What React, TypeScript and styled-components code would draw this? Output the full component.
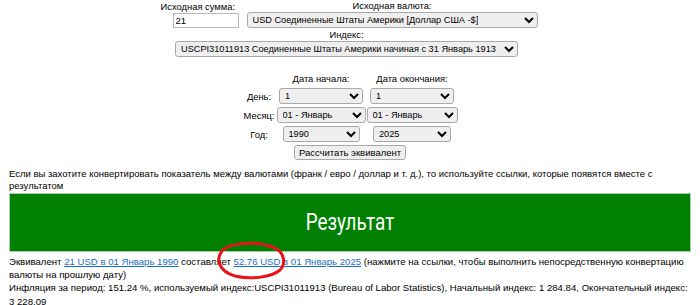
import styled, { createGlobalStyle } from "styled-components";

const GlobalStyle = createGlobalStyle`
  html, body {
    margin: 0;
    padding: 0;
    background: #fff;
  }
  body {
    font-family: "Liberation Sans", Arial, sans-serif;
    font-size: 9.5px;
    color: #000;
  }
`;

const Page = styled.div`
  width: 700px;
  height: 305px;
  overflow: hidden;
  position: relative;
`;

const Form = styled.form`
  display: flex;
  flex-direction: column;
  align-items: center;
`;

const TopRow = styled.div`
  display: flex;
  align-items: flex-end;
  gap: 8px;
  margin-right: 4px;
`;

const Field = styled.div`
  display: flex;
  flex-direction: column;
  align-items: center;
  gap: 1px;
`;

const AmountField = styled(Field)`
  width: 80px;
`;

const Label = styled.span<{ $left?: boolean }>`
  font-size: 9.4px;
  line-height: 11px;
  align-self: ${(p) => (p.$left ? "flex-start" : "center")};
  margin-left: ${(p) => (p.$left ? "2px" : "0")};
`;

const AmountInput = styled.input`
  align-self: flex-end;
  width: 66px;
  height: 15px;
  box-sizing: border-box;
  border: 1px solid #b8b8b8;
  font: 9.6px "Liberation Sans", Arial, sans-serif;
  padding: 0 2px;
`;

const Select = styled.select<{ $w: number }>`
  width: ${(p) => p.$w}px;
  height: 16px;
  box-sizing: border-box;
  font: 9.2px "Liberation Sans", Arial, sans-serif;
  color: #000;
  background: #efefef;
  border: 1px solid #a9a9a9;
  border-radius: 3px;
  padding: 0 1px;
`;

const IndexField = styled(Field)`
  margin-top: 1px;
  margin-right: 7px;
`;

const DateTable = styled.div`
  display: grid;
  grid-template-columns: 33px 91px 91px;
  align-items: center;
  justify-items: center;
  margin-top: 16px;
  row-gap: 3px;
`;

const ColHead = styled.span`
  font-size: 9.4px;
  line-height: 11px;
  margin-bottom: 1px;
`;

const RowLabel = styled.span`
  font-size: 9.4px;
`;

const CalcButton = styled.button`
  grid-column: 1 / 4;
  height: 15px;
  box-sizing: border-box;
  font: 9.5px "Liberation Sans", Arial, sans-serif;
  background: #efefef;
  border: 1px solid #a9a9a9;
  border-radius: 3px;
  padding: 0 4px;
  line-height: 12px;
`;

const Note = styled.p`
  margin: 8px 9px 0;
  font-size: 9.5px;
  line-height: 11.5px;
`;

const ResultBox = styled.div`
  margin: 2px 9px 0;
  height: 59px;
  box-sizing: border-box;
  background: #008000;
  border: 1px solid #a8cfa8;
  display: flex;
  align-items: center;
  justify-content: center;
`;

const ResultTitle = styled.h2`
  margin: 0;
  font: 400 23px Roboto, "Liberation Sans", sans-serif;
  color: #fff;
  transform: scaleX(0.82);
`;

const ResultText = styled.div`
  margin: 3px 9px 0;
  font-size: 9.6px;
  line-height: 13.2px;
`;

const Link = styled.a`
  color: #1a6fc4;
  text-decoration: underline;
`;

const Scribble = styled.svg`
  position: absolute;
  left: 216px;
  top: 241px;
  pointer-events: none;
`;

const days = ["1"];
const months = ["01 - Январь"];

export default function App() {
  return (
    <Page>
      <GlobalStyle />
      <Form>
        <TopRow>
          <AmountField>
            <Label $left>Исходная сумма:</Label>
            <AmountInput defaultValue="21" />
          </AmountField>
          <Field>
            <Label>Исходная валюта:</Label>
            <Select $w={291}>
              <option>USD Соединенные Штаты Америки [Доллар США -$]</option>
            </Select>
          </Field>
        </TopRow>
        <IndexField>
          <Label>Индекс:</Label>
          <Select $w={343}>
            <option>USCPI31011913 Соединенные Штаты Америки начиная с 31 Январь 1913</option>
          </Select>
        </IndexField>
        <DateTable>
          <span />
          <ColHead>Дата начала:</ColHead>
          <ColHead>Дата окончания:</ColHead>

          <RowLabel>День:</RowLabel>
          <Select $w={84}>
            {days.map((d) => (
              <option key={d}>{d}</option>
            ))}
          </Select>
          <Select $w={84}>
            {days.map((d) => (
              <option key={d}>{d}</option>
            ))}
          </Select>

          <RowLabel>Месяц:</RowLabel>
          <Select $w={89}>
            {months.map((m) => (
              <option key={m}>{m}</option>
            ))}
          </Select>
          <Select $w={91}>
            {months.map((m) => (
              <option key={m}>{m}</option>
            ))}
          </Select>

          <RowLabel>Год:</RowLabel>
          <Select $w={77}>
            <option>1990</option>
          </Select>
          <Select $w={78}>
            <option>2025</option>
          </Select>

          <CalcButton type="button">Рассчитать эквивалент</CalcButton>
        </DateTable>
      </Form>
      <Note>
        Если вы захотите конвертировать показатель между валютами (франк / евро / доллар и т. д.), то используйте
        ссылки, которые появятся вместе с результатом
      </Note>
      <ResultBox>
        <ResultTitle>Результат</ResultTitle>
      </ResultBox>
      <ResultText>
        Эквивалент <Link href="#">21 USD в 01 Январь 1990</Link> составляет{" "}
        <Link href="#">52.76 USD в 01 Январь 2025</Link> (нажмите на ссылки, чтобы выполнить непосредственную
        конвертацию валюты на прошлую дату)
        <br />
        Инфляция за период: 151.24 %, используемый индекс:USCPI31011913 (Bureau of Labor Statistics), Начальный
        индекс: 1 284.84, Окончательный индекс: 3 228.09
      </ResultText>
      <Scribble width="72" height="40" viewBox="0 0 72 40">
        <path
          d="M46 3 C30 1 12 3 6 10 C0 18 2 30 19 35 C35 39 56 36 64 29 C70 23 68 13 62 9 C58 6 53 5 49 4"
          fill="none"
          stroke="#e8141c"
          strokeWidth="3"
          strokeLinecap="round"
        />
      </Scribble>
    </Page>
  );
}
